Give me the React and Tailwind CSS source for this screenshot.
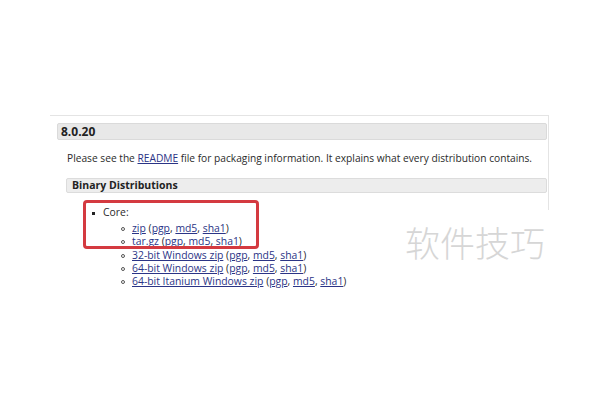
import React from "react";

const link = "text-[#2b3486] underline underline-offset-1";

function Sub({ label }) {
  return (
    <li className="flex items-center h-[13px]">
      <span className="w-[4px] h-[4px] rounded-full border border-[#555] mr-[7px]" />
      <span>
        <a className={link}>{label}</a> (<a className={link}>pgp</a>,{" "}
        <a className={link}>md5</a>, <a className={link}>sha1</a>)
      </span>
    </li>
  );
}

export default function App() {
  return (
    <div
      className="relative w-[600px] h-[400px] overflow-hidden bg-white text-[#2a2a2a]"
      style={{ fontFamily: '"Open Sans", "Noto Sans", sans-serif' }}
    >
      <div className="pt-[115px] pl-[50px]">
        {/* release box */}
        <div className="w-[499px] border-t border-r border-[#e4e4e4] pt-[7px] pb-[17px]">
          <div className="ml-[7px] mr-[1px] h-[17px] flex items-center bg-[#e8e8e8] border border-[#dadada] rounded-[2px] pl-[3px] text-[12px] font-bold text-[#222]">
            8.0.20
          </div>
          <p className="mt-[11px] pl-[17px] text-[10.2px] leading-[14px]">
            Please see the <a className={link}>README</a> file for packaging
            information. It explains what every distribution contains.
          </p>
          <div className="mt-[13px] ml-[16px] mr-[1px] h-[15px] flex items-center bg-[#ededed] border border-[#dcdcdc] rounded-[2px] pl-[5px] text-[10.5px] font-bold text-[#222]">
            Binary Distributions
          </div>
        </div>

        {/* list */}
        <div className="relative -mt-[4px] text-[10.4px]">
          <div className="flex items-center h-[14px] pl-[42px]">
            <span className="w-[3px] h-[3px] bg-[#222] mr-[8px]" />
            <span>Core:</span>
          </div>
          <ul className="mt-[2px] pl-[71px]">
            <Sub label="zip" />
            <Sub label="tar.gz" />
            <li className="h-[1px]" />
            <Sub label="32-bit Windows zip" />
            <Sub label="64-bit Windows zip" />
            <Sub label="64-bit Itanium Windows zip" />
          </ul>
          <div className="absolute left-[33px] top-[-6px] w-[176px] h-[49px] border-[3px] border-[#d43a40] rounded-[4px]" />
        </div>
      </div>

      <div
        className="absolute left-[405px] top-[224px] text-[35px] font-light text-[#d6d6d6] leading-none"
        style={{ fontFamily: '"Noto Sans CJK SC", sans-serif' }}
      >
        软件技巧
      </div>
    </div>
  );
}
